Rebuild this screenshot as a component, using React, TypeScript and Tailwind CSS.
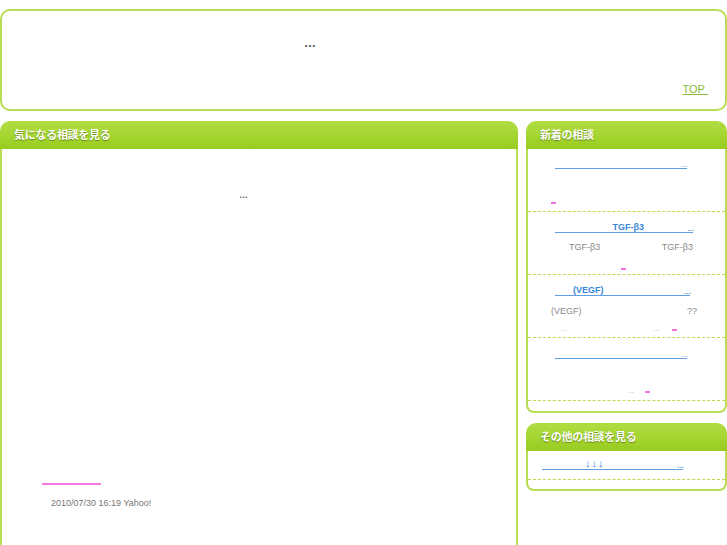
import React from "react";

const sans = "font-['Liberation_Sans','Noto_Sans_CJK_JP',sans-serif]";

function PanelHead({ title }: { title: string }) {
  return (
    <div className="h-[28px] rounded-t-[10px] bg-gradient-to-b from-[#b0dc42] via-[#a5d632] to-[#98cb1e] flex items-center px-[14px]">
      <span className="text-white text-[11px] font-bold tracking-tight [text-shadow:0_1px_1px_rgba(60,90,0,0.6)]">
        {title}
      </span>
    </div>
  );
}

function Pink({ className = "" }: { className?: string }) {
  return <span className={`inline-block h-[2px] bg-[#f472e0] ${className}`} />;
}

function Dots({ className = "" }: { className?: string }) {
  return <span className={`text-[7px] leading-none tracking-[-1px] ${className}`}>…</span>;
}

export default function App() {
  return (
    <div className={`w-[727px] h-[545px] overflow-hidden bg-white ${sans}`}>
      {/* header */}
      <div className="mt-[9px] h-[102px] border-2 border-[#b8dc52] rounded-[10px] flex flex-col">
        <div className="pt-[26px] pl-[302px] text-[#555] text-[12px] font-bold leading-none">…</div>
        <div className="mt-auto mb-[14px] flex justify-end pr-[17px]">
          <a className="text-[#8ab83a] text-[11px] underline leading-none">TOP&nbsp;</a>
        </div>
      </div>

      <div className="mt-[10px] flex gap-[8px]">
        {/* left column */}
        <div className="w-[518px] h-[430px] flex flex-col">
          <PanelHead title="気になる相談を見る" />
          <div className="flex-1 border-x-2 border-[#b8dc52] flex flex-col">
            <div className="pt-[42px] pl-[237px] text-[#666] text-[9px] font-bold leading-none">…</div>
            <div className="mt-auto mb-[43px] pl-[40px] flex flex-col">
              <span className="w-[59px] h-[2px] bg-[#f37ae0]" />
              <span className="mt-[14px] pl-[9px] text-[9px] text-[#777] leading-none">2010/07/30 16:19 Yahoo!</span>
            </div>
          </div>
        </div>

        {/* right column */}
        <div className="w-[201px] flex flex-col gap-[10px]">
          <div className="flex flex-col">
            <PanelHead title="新着の相談" />
            <div className="border-2 border-t-0 border-[#b8dc52] rounded-b-[8px] pb-[10px] text-[9px] leading-none">
              {/* item 1 */}
              <div className="h-[63px] border-b border-dashed border-[#b8dc52] flex flex-col pl-[27px]">
                <div className="mt-[13px] w-[132px] h-[7px] border-b border-[#5f9ee0] flex justify-end items-end">
                  <Dots className="text-[#3a86d8]" />
                </div>
                <Pink className="mt-[33px] -ml-[4px] w-[5px]" />
              </div>
              {/* item 2 */}
              <div className="h-[63px] border-b border-dashed border-[#b8dc52] flex flex-col pl-[27px]">
                <div className="mt-[11px] w-[138px] border-b border-[#5f9ee0] flex justify-end items-end text-[#3a86d8] font-bold">
                  <span className="mr-[43px]">TGF-β3</span>
                  <Dots />
                </div>
                <div className="mt-[10px] w-[138px] flex justify-between pl-[14px] text-[#888]">
                  <span>TGF-β3</span>
                  <span>TGF-β3</span>
                </div>
                <Pink className="mt-[16px] ml-[66px] w-[5px]" />
              </div>
              {/* item 3 */}
              <div className="h-[63px] border-b border-dashed border-[#b8dc52] flex flex-col pl-[27px]">
                <div className="mt-[11px] w-[135px] border-b border-[#5f9ee0] flex items-end text-[#3a86d8] font-bold">
                  <span className="ml-[18px]">(VEGF)</span>
                  <Dots className="ml-auto" />
                </div>
                <div className="mt-[11px] -ml-[4px] flex pr-[28px] text-[#888]">
                  <span>(VEGF)</span>
                  <span className="ml-auto">??</span>
                </div>
                <div className="mt-[9px] flex items-end text-[#aaa]">
                  <Dots className="ml-[6px]" />
                  <Dots className="ml-[86px]" />
                  <Pink className="ml-[13px] mb-[1px] w-[5px]" />
                </div>
              </div>
              {/* item 4 */}
              <div className="h-[63px] border-b border-dashed border-[#b8dc52] flex flex-col pl-[27px]">
                <div className="mt-[14px] w-[132px] h-[7px] border-b border-[#5f9ee0] flex justify-end items-end">
                  <Dots className="text-[#3a86d8]" />
                </div>
                <div className="mt-[28px] flex items-end text-[#aaa]">
                  <Dots className="ml-[72px]" />
                  <Pink className="ml-[12px] mb-[1px] w-[5px]" />
                </div>
              </div>
            </div>
          </div>

          <div className="flex flex-col">
            <PanelHead title="その他の相談を見る" />
            <div className="border-2 border-t-0 border-[#b8dc52] rounded-b-[8px] pb-[9px] text-[9px] leading-none">
              <div className="h-[29px] border-b border-dashed border-[#b8dc52] pl-[14px] flex items-end pb-[9px]">
                <div className="w-[141px] border-b border-[#5f9ee0] flex items-end text-[#3a86d8] font-bold">
                  <span className="ml-[43px] text-[11px] tracking-[1px]">↓↓↓</span>
                  <Dots className="ml-auto" />
                </div>
              </div>
            </div>
          </div>
        </div>
      </div>
    </div>
  );
}
